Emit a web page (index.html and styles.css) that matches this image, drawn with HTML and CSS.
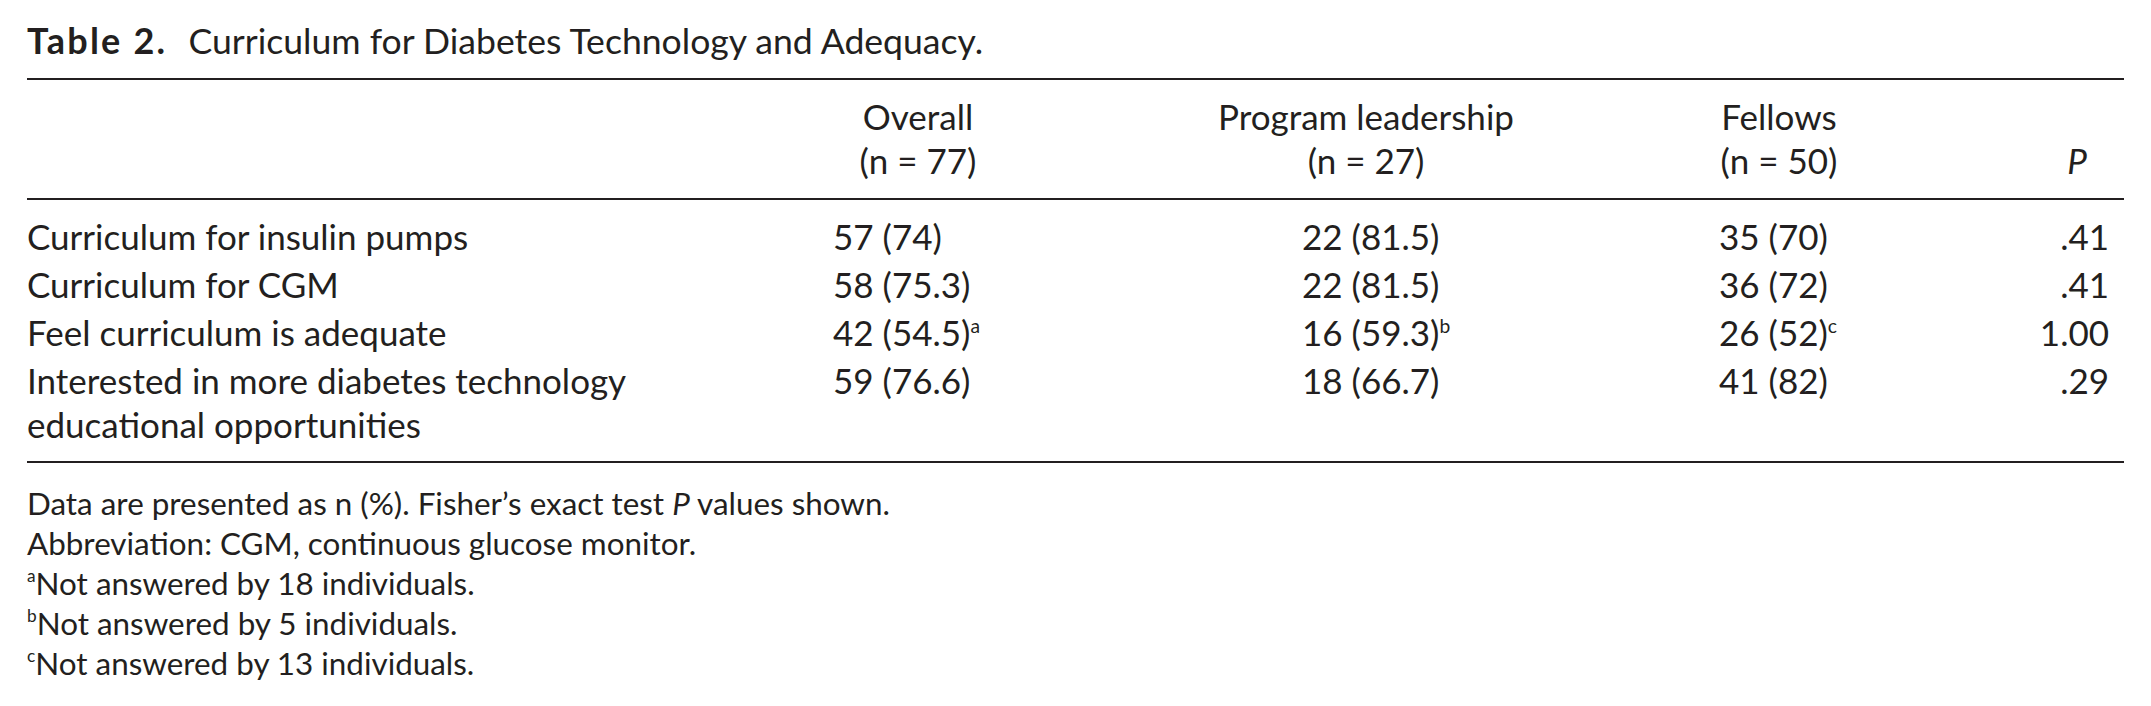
FILE: index.html
```html
<!DOCTYPE html>
<html lang="en">
<head>
<meta charset="utf-8">
<title>Table 2. Curriculum for Diabetes Technology and Adequacy.</title>
<link rel="stylesheet" href="styles.css">
</head>
<body>
<div class="page">
  <p class="caption"><b class="caption-label">Table 2.</b> <span class="caption-text">Curriculum for Diabetes Technology and Adequacy.</span></p>

  <div class="table">
    <div class="thead grid">
      <div class="cell"></div>
      <div class="cell"><div class="head head-overall"><span>Overall<br>(n = 77)</span></div></div>
      <div class="cell"><div class="head head-program"><span>Program leadership<br>(n = 27)</span></div></div>
      <div class="cell"><div class="head head-fellows"><span>Fellows<br>(n = 50)</span></div></div>
      <div class="cell cell-p head-p"><i>P</i></div>
    </div>

    <div class="tbody">
      <div class="row grid">
        <div class="cell label">Curriculum for insulin pumps</div>
        <div class="cell">57 (74)</div>
        <div class="cell">22 (81.5)</div>
        <div class="cell">35 (70)</div>
        <div class="cell cell-p">.41</div>
      </div>
      <div class="row grid">
        <div class="cell label">Curriculum for CGM</div>
        <div class="cell">58 (75.3)</div>
        <div class="cell">22 (81.5)</div>
        <div class="cell">36 (72)</div>
        <div class="cell cell-p">.41</div>
      </div>
      <div class="row grid">
        <div class="cell label">Feel curriculum is adequate</div>
        <div class="cell">42 (54.5)<sup class="fn">a</sup></div>
        <div class="cell">16 (59.3)<sup class="fn">b</sup></div>
        <div class="cell">26 (52)<sup class="fn">c</sup></div>
        <div class="cell cell-p">1.00</div>
      </div>
      <div class="row grid">
        <div class="cell label">Interested in more diabetes technology educational opportunities</div>
        <div class="cell">59 (76.6)</div>
        <div class="cell">18 (66.7)</div>
        <div class="cell">41 (82)</div>
        <div class="cell cell-p">.29</div>
      </div>
    </div>
  </div>

  <div class="notes">
    <p>Data are presented as n (%). Fisher’s exact test <i>P</i> values shown.</p>
    <p>Abbreviation: CGM, continuous glucose monitor.</p>
    <p><sup class="fn">a</sup>Not answered by 18 individuals.</p>
    <p><sup class="fn">b</sup>Not answered by 5 individuals.</p>
    <p><sup class="fn">c</sup>Not answered by 13 individuals.</p>
  </div>
</div>
</body>
</html>
```

FILE: styles.css
```css
html, body {
  margin: 0;
  padding: 0;
  background: #ffffff;
}

body {
  font-family: Lato, "Open Sans", "Liberation Sans", sans-serif;
  color: #231f20;
  font-size: 35px;
  line-height: 44px;
}

.page {
  width: 2097px;
  padding: 18px 27px 0 27px;
}

.caption {
  margin: 0;
  white-space: nowrap;
  font-size: 36px;
}

.caption-label {
  font-weight: 700;
  letter-spacing: 2.2px;
  margin-right: 12px;
}

.caption-text {
  font-size: 35.6px;
}

.table {
  margin-top: 15px;
  border-top: 2px solid #231f20;
  border-bottom: 2px solid #231f20;
}

.grid {
  display: grid;
  grid-template-columns: 806px 469px 417px 250px 155px;
}

.thead {
  padding: 14px 0 16px 0;
  border-bottom: 2px solid #231f20;
}

.head {
  display: flex;
  justify-content: center;
  white-space: nowrap;
  text-align: center;
}

.head-overall { width: 170px; }
.head-program { width: 128px; }
.head-fellows { width: 120px; }

.tbody {
  padding: 12px 0 13px 0;
}

.row {
  padding: 2px 0;
}

.cell {
  white-space: nowrap;
}

.label {
  white-space: normal;
  max-width: 650px;
}

.cell-p {
  text-align: right;
  padding-right: 15px;
}

.thead .head-p {
  align-self: end;
  padding-right: 37px;
}

.fn {
  font-size: 0.55em;
  line-height: 0;
  vertical-align: 0.7em;
}

.notes {
  margin-top: 20px;
  font-size: 31.4px;
  line-height: 40px;
}

.notes p {
  margin: 0;
  white-space: nowrap;
}

.notes .fn {
  font-size: 0.55em;
  vertical-align: 0.75em;
}
```
